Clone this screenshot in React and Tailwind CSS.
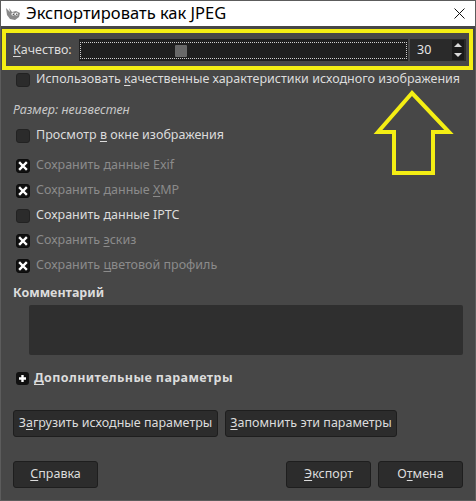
import React from 'react';

const font = "font-['Noto_Sans',sans-serif]";

function U({ children }) {
  return <span className="underline underline-offset-2">{children}</span>;
}

function Check({ checked }) {
  return (
    <span
      className={`flex h-[14px] w-[14px] shrink-0 items-center justify-center rounded-[3px] border ${
        checked ? 'border-[#0c0c0c] bg-[#111111]' : 'border-[#222222] bg-[#2b2b2b]'
      }`}
    >
      {checked && (
        <svg width="10" height="10" viewBox="0 0 10 10">
          <path d="M2 2 L8 8 M8 2 L2 8" stroke="#ffffff" strokeWidth="2.4" strokeLinecap="square" />
        </svg>
      )}
    </span>
  );
}

function CheckRow({ checked, dim, children, className = '' }) {
  return (
    <div className={`flex h-[25px] items-center gap-[6px] pl-[15px] ${className}`}>
      <Check checked={checked} />
      <span className={dim ? 'text-[#8b8b8b]' : 'text-[#dcdcdc]'}>{children}</span>
    </div>
  );
}

function Btn({ children, className = '' }) {
  return (
    <div
      className={`flex h-[27px] items-center justify-center rounded-[3px] border border-[#1e1e1e] bg-[#2c2c2c] text-[#dcdcdc] ${className}`}
    >
      {children}
    </div>
  );
}

function Wilber() {
  return (
    <svg width="16" height="14" viewBox="0 0 16 14">
      <path d="M1 1 L5 5 L4 1 L7 5 L11 4 L15 6 L14 10 L10 13 L5 12 L2 8 Z" fill="#8a8a8a" />
      <circle cx="8" cy="7" r="1.6" fill="#ffffff" />
      <circle cx="11.5" cy="7" r="1.6" fill="#ffffff" />
      <circle cx="8.3" cy="7.2" r="0.7" fill="#333333" />
      <circle cx="11.8" cy="7.2" r="0.7" fill="#333333" />
    </svg>
  );
}

export default function App() {
  return (
    <div className={`relative flex h-[501px] w-[476px] flex-col overflow-hidden border border-[#5c5c5c] bg-[#474747] text-[12.5px] ${font}`}>
      {/* title bar */}
      <div className="flex h-[25px] shrink-0 items-center bg-white pl-[4px] pr-[10px]">
        <Wilber />
        <span className="ml-[5px] text-[16.5px] leading-none text-black">Экспортировать как JPEG</span>
        <svg className="ml-auto" width="11" height="11" viewBox="0 0 11 11">
          <path d="M0.5 0.5 L10.5 10.5 M10.5 0.5 L0.5 10.5" stroke="#111" strokeWidth="1" />
        </svg>
      </div>

      {/* quality */}
      <div className="mt-[12px] flex h-[24px] items-center pl-[12px] pr-[9px]">
        <span className="w-[66px] shrink-0 text-[#dcdcdc]">
          <U>К</U>ачество:
        </span>
        <div className="flex h-[22px] flex-1 items-center bg-[#1f1f1f] px-[1px]">
          <div className="relative h-[17px] w-full border border-dotted border-[#d0d0d0]">
            <div className="absolute left-[94px] top-[2px] h-[12px] w-[12px] rounded-[1px] bg-[#686868]" />
          </div>
        </div>
        <div className="ml-[2px] flex h-[22px] w-[56px] items-center bg-[#2a2a2a] pl-[7px] pr-[2px]">
          <span className="text-[#e6e6e6]">30</span>
          <div className="ml-auto flex h-[20px] w-[12px] flex-col justify-between bg-[#1a1a1a] py-[2px]">
            <svg width="12" height="6" viewBox="0 0 12 6"><path d="M2 5 L6 1 L10 5 Z" fill="#d8d8d8" /></svg>
            <svg width="12" height="6" viewBox="0 0 12 6"><path d="M2 1 L6 5 L10 1 Z" fill="#d8d8d8" /></svg>
          </div>
        </div>
      </div>

      <CheckRow className="mt-[5px]">
        Использовать <U>к</U>ачественные характеристики исходного изображения
      </CheckRow>

      <div className="mt-[6px] flex h-[25px] items-center pl-[12px] italic text-[#c8c8c8]">Размер: неизвестен</div>

      <CheckRow>
        Просмотр <U>в</U> окне изображения
      </CheckRow>

      <CheckRow checked dim className="mt-[5px]">
        Сохранить данные Exif
      </CheckRow>
      <CheckRow checked dim>
        Сохранить данные <U>X</U>MP
      </CheckRow>
      <CheckRow>Сохранить данные IPTC</CheckRow>
      <CheckRow checked dim>
        Сохранить <U>э</U>скиз
      </CheckRow>
      <CheckRow checked dim>
        Сохранить <U>ц</U>ветовой профиль
      </CheckRow>

      <div className="mt-[6px] pl-[12px] font-bold text-[#dcdcdc]">Комментарий</div>
      <div className="ml-[28px] mr-[12px] mt-[2px] h-[50px] rounded-[2px] bg-[#2f2f2f]" />

      <div className="mt-[13px] flex h-[22px] items-center gap-[5px] pl-[15px] font-bold text-[#dcdcdc]">
        <span className="flex h-[13px] w-[13px] items-center justify-center rounded-[3px] bg-[#111111]">
          <svg width="9" height="9" viewBox="0 0 9 9"><path d="M4.5 1 V8 M1 4.5 H8" stroke="#fff" strokeWidth="2.4" /></svg>
        </span>
        <span className="tracking-[0.4px]">
          <U>Д</U>ополнительные параметры
        </span>
      </div>

      <div className="mt-[20px] flex gap-[7px] pl-[12px]">
        <Btn className="w-[205px]">
          З<U>а</U>грузить исходные параметры
        </Btn>
        <Btn className="w-[172px]">
          <U>З</U>апомнить эти параметры
        </Btn>
      </div>

      <div className="mt-[24px] flex pl-[12px] pr-[12px]">
        <Btn className="w-[85px]">
          <U>С</U>правка
        </Btn>
        <Btn className="ml-auto w-[85px]">
          <U>Э</U>кспорт
        </Btn>
        <Btn className="ml-[7px] w-[85px]">
          О<U>т</U>мена
        </Btn>
      </div>

      {/* yellow annotation overlay */}
      <div className="pointer-events-none absolute left-[1px] top-[28px] h-[41px] w-[471px] border-[4px] border-[#f4ee14]" />
      <svg className="pointer-events-none absolute left-[370px] top-[86px]" width="90" height="92" viewBox="370 86 90 92">
        <path
          d="M411 92 L377 131 L393 131 L393 172 L432 172 L432 131 L448 131 Z"
          fill="none"
          stroke="#f4ee14"
          strokeWidth="4"
          strokeLinejoin="miter"
        />
      </svg>
    </div>
  );
}
